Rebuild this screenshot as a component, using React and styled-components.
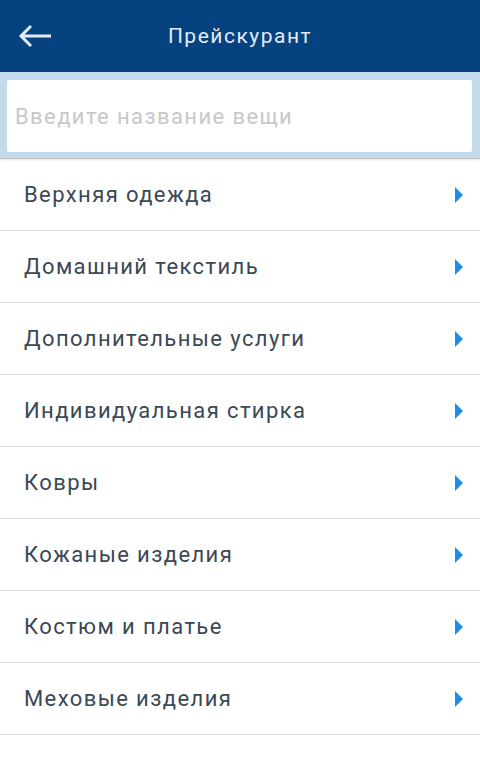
import React from "react";
import styled, { createGlobalStyle } from "styled-components";

const categories = [
  "Верхняя одежда",
  "Домашний текстиль",
  "Дополнительные услуги",
  "Индивидуальная стирка",
  "Ковры",
  "Кожаные изделия",
  "Костюм и платье",
  "Меховые изделия",
];

export default function App() {
  return (
    <>
      <GlobalStyle />
      <Screen>
        <Header>
          <BackButton aria-label="Назад">
            <svg width="34" height="24" viewBox="0 0 34 24" fill="none">
              <path
                d="M33 12H3M13 2L3 12l10 10"
                stroke="#e3eaf2"
                strokeWidth="3"
              />
            </svg>
          </BackButton>
          <Title>Прейскурант</Title>
        </Header>
        <SearchBar>
          <SearchInput placeholder="Введите название вещи" />
        </SearchBar>
        <List>
          {categories.map((name) => (
            <Row key={name}>
              <RowLabel>{name}</RowLabel>
              <Chevron />
            </Row>
          ))}
        </List>
      </Screen>
    </>
  );
}

const GlobalStyle = createGlobalStyle`
  html, body {
    margin: 0;
    padding: 0;
    background: #fff;
  }
  body {
    font-family: Roboto, "Noto Sans", sans-serif;
  }
  * {
    box-sizing: border-box;
  }
`;

const Screen = styled.div`
  width: 480px;
  height: 760px;
  overflow: hidden;
  display: flex;
  flex-direction: column;
  background: #fff;
`;

const Header = styled.header`
  height: 72px;
  flex-shrink: 0;
  background: #05427f;
  display: flex;
  align-items: center;
  justify-content: center;
  position: relative;
`;

const BackButton = styled.button`
  position: absolute;
  left: 18px;
  top: 24px;
  padding: 0;
  border: 0;
  background: none;
  display: flex;
  cursor: pointer;
`;

const Title = styled.h1`
  margin: 0;
  font-size: 21px;
  font-weight: 400;
  color: #e3eaf2;
  letter-spacing: 1.5px;
`;

const SearchBar = styled.div`
  flex-shrink: 0;
  background: #c3d9ec;
  padding: 8px 8px 6px 7px;
  border-bottom: 1px solid #c4c4c4;
  box-shadow: 0 1px 2px rgba(0, 0, 0, 0.1);
`;

const SearchInput = styled.input`
  display: block;
  width: 100%;
  height: 72px;
  border: 0;
  border-radius: 2px;
  background: #fff;
  padding: 0 8px;
  font-family: Roboto, "Noto Sans", sans-serif;
  font-size: 22px;
  letter-spacing: 1.4px;
  color: #333;
  outline: none;
  &::placeholder {
    color: #c8c8c8;
  }
`;

const List = styled.ul`
  list-style: none;
  margin: 0;
  padding: 0;
`;

const Row = styled.li`
  height: 72px;
  display: flex;
  align-items: center;
  justify-content: space-between;
  padding: 0 17px 0 24px;
  border-bottom: 1px solid #e3e3e3;
`;

const RowLabel = styled.span`
  font-size: 22px;
  letter-spacing: 1.4px;
  color: #3b4855;
`;

const Chevron = styled.span`
  width: 0;
  height: 0;
  border-top: 8px solid transparent;
  border-bottom: 8px solid transparent;
  border-left: 8px solid #1c8cf0;
`;
